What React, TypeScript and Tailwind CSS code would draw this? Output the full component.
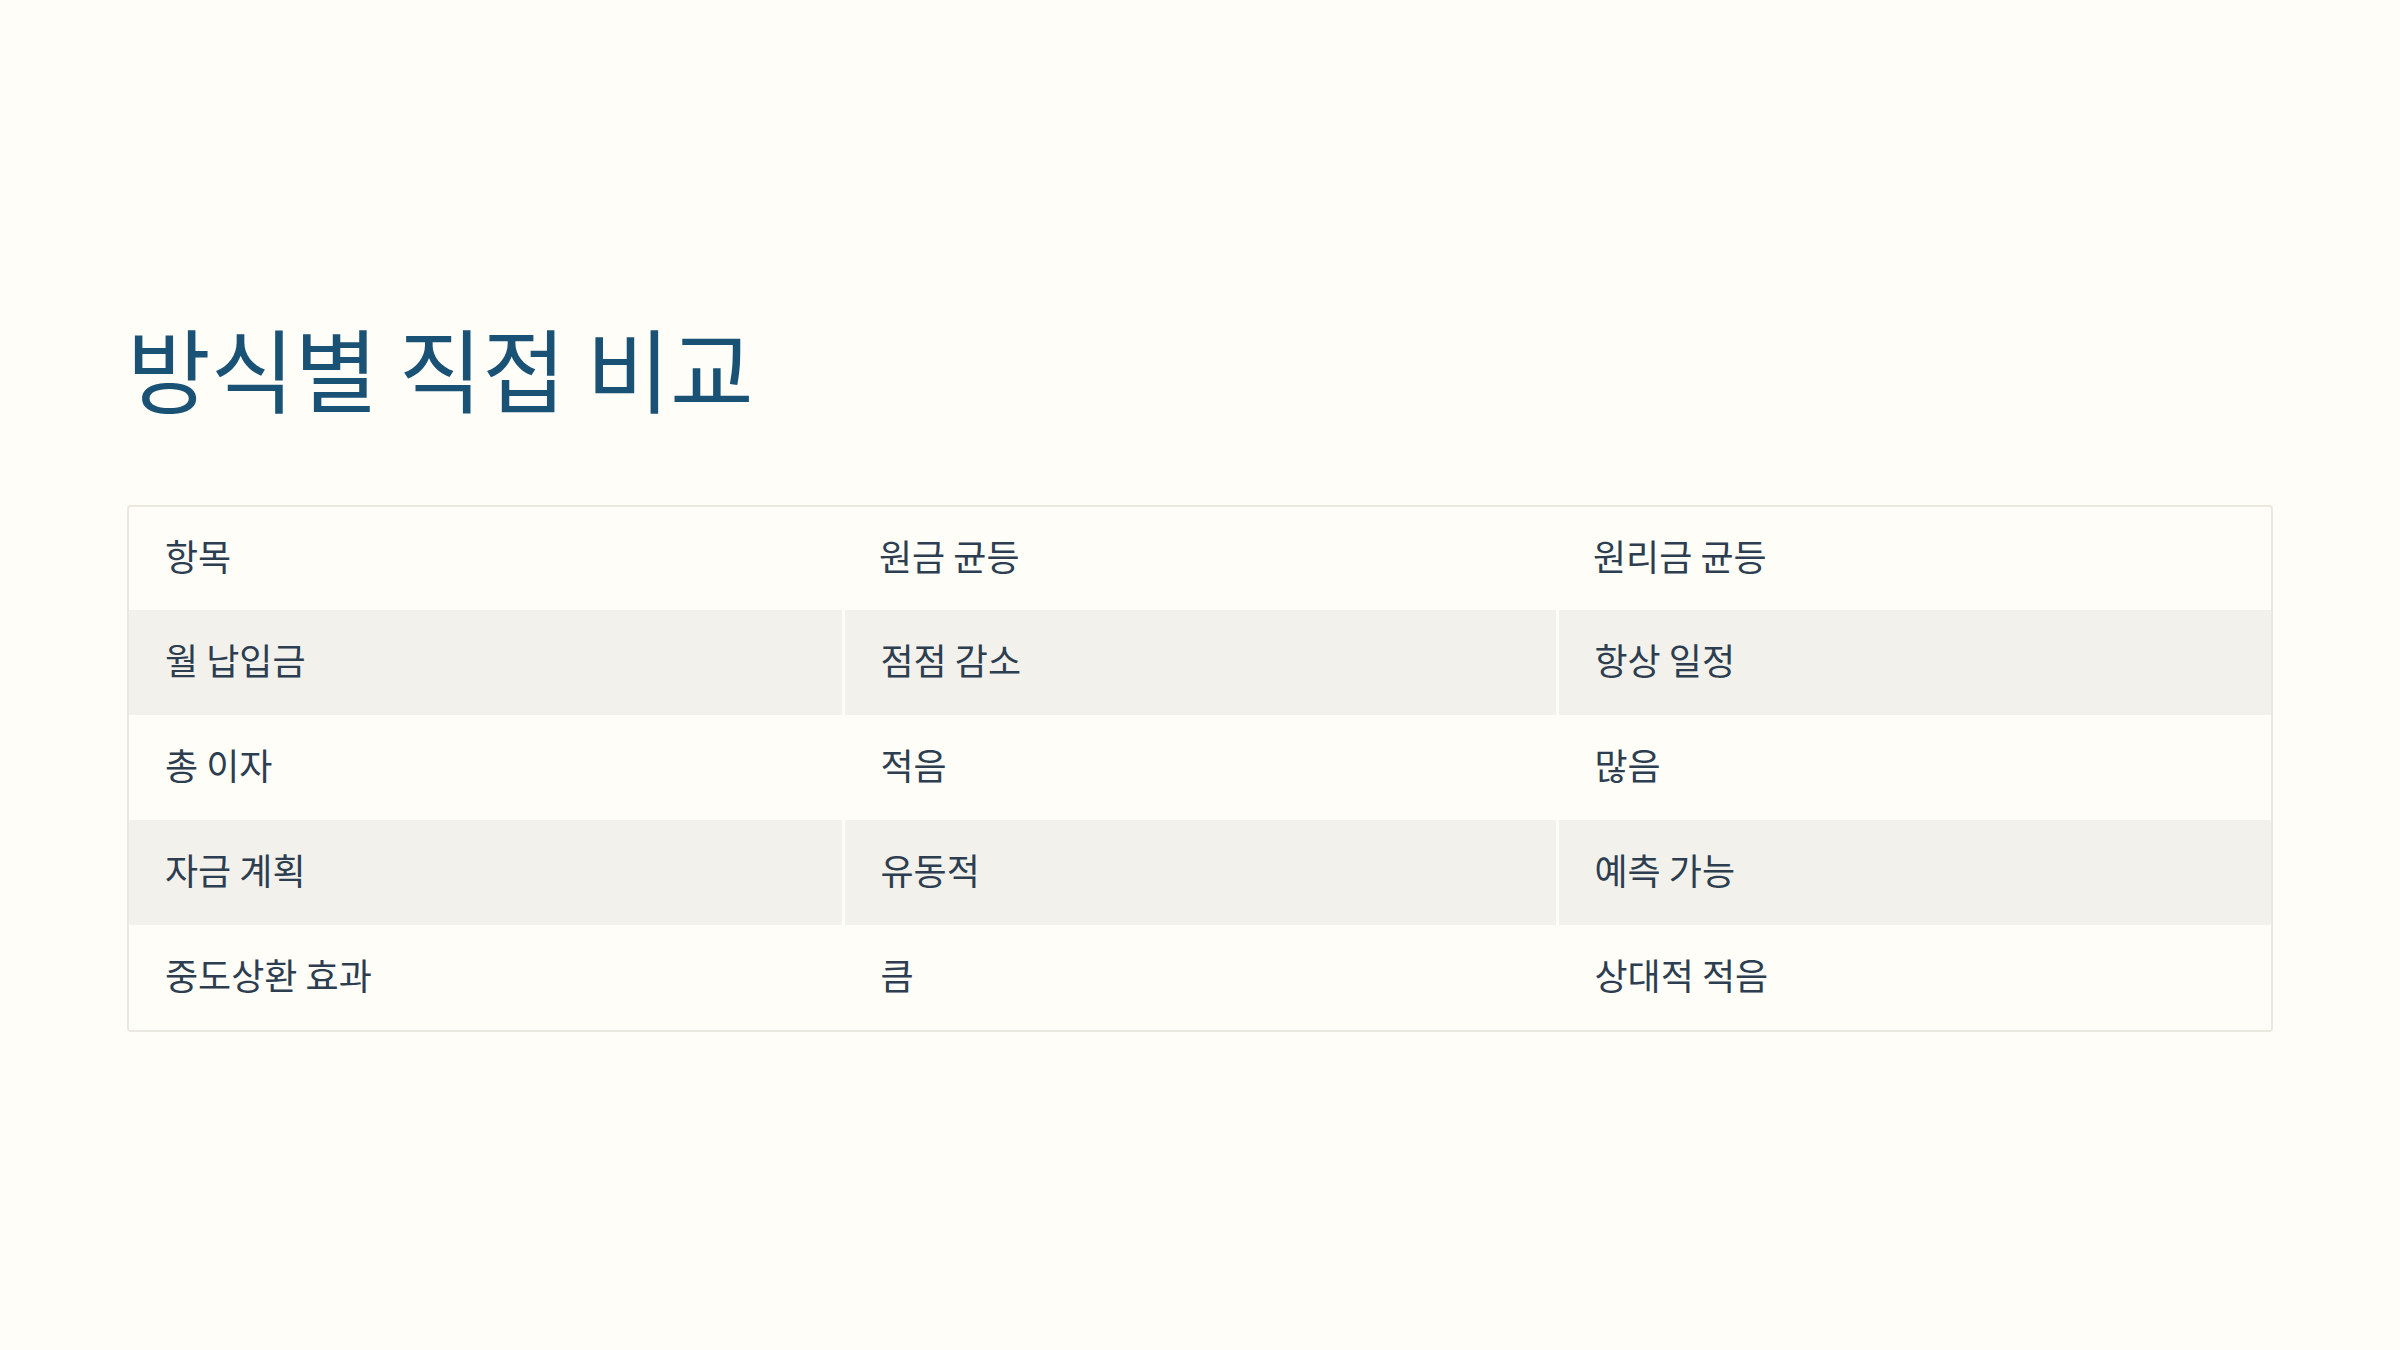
const rows = [
  ["월 납입금", "점점 감소", "항상 일정"],
  ["총 이자", "적음", "많음"],
  ["자금 계획", "유동적", "예측 가능"],
  ["중도상환 효과", "큼", "상대적 적음"],
];

const header = ["항목", "원금 균등", "원리금 균등"];

export default function App() {
  return (
    <div
      className="flex h-screen w-full flex-col justify-center bg-[#fffdf7] px-[127px] pb-[6px]"
      style={{ fontFamily: '"Noto Sans CJK KR", "Noto Sans", sans-serif' }}
    >
      <h1 className="mb-[84px] text-[91px] font-normal leading-[1.2] text-[#1a5276]">
        방식별 직접 비교
      </h1>
      <div className="overflow-hidden rounded-[4px] border-2 border-[#ebe8e0]">
        <table className="w-full table-fixed border-collapse text-[36px] text-[#2c3e50]">
          <thead>
            <tr className="bg-[#fffdf7]">
              {header.map((h) => (
                <th key={h} className="h-[103px] px-9 pb-[8px] text-left font-normal">
                  {h}
                </th>
              ))}
            </tr>
          </thead>
          <tbody>
            {rows.map((r, i) => (
              <tr key={r[0]} className={i % 2 === 0 ? "bg-[#f3f1eb]" : "bg-[#fffdf7]"}>
                {r.map((c, j) => (
                  <td
                    key={j}
                    className={
                      "h-[105px] px-9 pb-[8px] " +
                      (j < 2 ? "border-r-[3px] border-[#fffdf7]" : "")
                    }
                  >
                    {c}
                  </td>
                ))}
              </tr>
            ))}
          </tbody>
        </table>
      </div>
    </div>
  );
}
